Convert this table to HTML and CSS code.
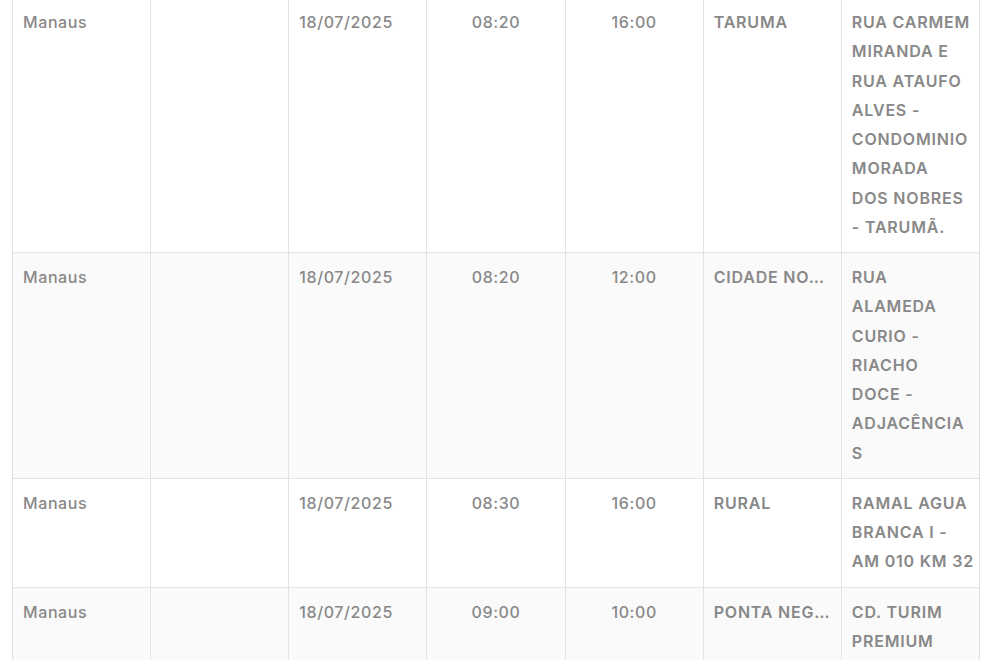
FILE: index.html
```html
<!DOCTYPE html>
<html lang="pt-BR">
<head>
<meta charset="utf-8">
<title>Agenda</title>
<link rel="stylesheet" href="styles.css">
</head>
<body>
<div class="wrap">
<table class="grid">
  <tbody>
    <tr>
      <td>Manaus</td>
      <td></td>
      <td>18/07/2025</td>
      <td class="c">08:20</td>
      <td class="c">16:00</td>
      <td class="up ell">TARUMA</td>
      <td class="up addr">RUA CARMEM<br>MIRANDA E<br>RUA ATAUFO<br>ALVES -<br>CONDOMINIO<br>MORADA<br>DOS NOBRES<br>- TARUMÃ.</td>
    </tr>
    <tr class="alt">
      <td>Manaus</td>
      <td></td>
      <td>18/07/2025</td>
      <td class="c">08:20</td>
      <td class="c">12:00</td>
      <td class="up ell">CIDADE NOVA</td>
      <td class="up addr">RUA<br>ALAMEDA<br>CURIO -<br>RIACHO<br>DOCE -<br>ADJACÊNCIA<br>S</td>
    </tr>
    <tr>
      <td>Manaus</td>
      <td></td>
      <td>18/07/2025</td>
      <td class="c">08:30</td>
      <td class="c">16:00</td>
      <td class="up ell">RURAL</td>
      <td class="up addr">RAMAL AGUA<br>BRANCA I -<br>AM 010 KM 32</td>
    </tr>
    <tr class="alt">
      <td>Manaus</td>
      <td></td>
      <td>18/07/2025</td>
      <td class="c">09:00</td>
      <td class="c">10:00</td>
      <td class="up ell">PONTA NEGRA</td>
      <td class="up addr">CD. TURIM<br>PREMIUM</td>
    </tr>
  </tbody>
</table>
</div>
</body>
</html>
```

FILE: styles.css
```css
html, body {
  margin: 0;
  padding: 0;
  background: #ffffff;
}
body {
  font-family: Inter, "Open Sans", "DejaVu Sans", sans-serif;
  color: #888888;
  overflow: hidden;
  height: 660px;
}
.wrap {
  padding-left: 12px;
  margin-top: -3px;
}
.grid {
  width: 968px;
  table-layout: fixed;
  border-collapse: collapse;
  font-size: 16px;
  line-height: 29.25px;
}
.grid td {
  border: 1px solid #e3e3e3;
  padding: 10px 10px;
  vertical-align: top;
  font-weight: 500;
  letter-spacing: 0.6px;
  text-align: left;
}
.grid tr.alt td {
  background: #fafafa;
}
.grid td.c {
  text-align: center;
}
.grid td.up {
  font-weight: 600;
  letter-spacing: 0.8px;
}
.grid td.ell {
  white-space: nowrap;
  overflow: hidden;
  text-overflow: ellipsis;
}
.grid td.addr {
  white-space: nowrap;
}
```
